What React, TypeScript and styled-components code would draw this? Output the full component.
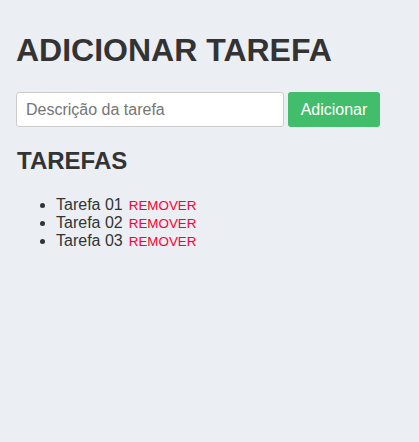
import React, { useState } from 'react'
import styled, { createGlobalStyle } from 'styled-components'

const GlobalStyle = createGlobalStyle`
  html, body {
    margin: 0;
    padding: 0;
    background-color: #ebeff3;
  }
  body {
    font-family: "Liberation Sans", Arial, sans-serif;
    color: #333333;
  }
`

const Page = styled.div`
  min-height: 442px;
  padding: 8px 16px;
  box-sizing: border-box;
`

const Title = styled.h1`
  font-size: 32px;
  font-weight: bold;
  margin: 24px 0 23px 0;
`

const Form = styled.form`
  display: flex;
  align-items: center;
  gap: 4px;
`

const Input = styled.input`
  width: 268px;
  height: 35px;
  box-sizing: border-box;
  border: 1px solid #cccccc;
  border-radius: 3px;
  padding: 0 9px;
  font-family: "Liberation Sans", Arial, sans-serif;
  font-size: 16px;
  color: #333;
  background: #ffffff;
  &::placeholder {
    color: #757575;
  }
`

const Button = styled.button`
  width: 92px;
  height: 35px;
  padding: 0;
  border: none;
  border-radius: 3px;
  background-color: #42bd6c;
  color: #ffffff;
  font-family: "Liberation Sans", Arial, sans-serif;
  font-size: 16px;
  cursor: pointer;
`

const SubTitle = styled.h2`
  font-size: 24px;
  font-weight: bold;
  margin: 20px 0 0 1px;
`

const List = styled.ul`
  margin: 21px 0 0 0;
  padding-left: 40px;
  font-size: 16px;
  line-height: 17px;
`

const Item = styled.li``

const Remove = styled.span`
  margin-left: 6px;
  font-size: 13.4px;
  color: #ff0033;
  cursor: pointer;
`

export default function App() {
  const [tasks] = useState(['Tarefa 01', 'Tarefa 02', 'Tarefa 03'])
  return (
    <Page>
      <GlobalStyle />
      <Title>ADICIONAR TAREFA</Title>
      <Form onSubmit={(e) => e.preventDefault()}>
        <Input placeholder="Descrição da tarefa" />
        <Button type="submit">Adicionar</Button>
      </Form>
      <SubTitle>TAREFAS</SubTitle>
      <List>
        {tasks.map((t) => (
          <Item key={t}>
            {t}
            <Remove>REMOVER</Remove>
          </Item>
        ))}
      </List>
    </Page>
  )
}
